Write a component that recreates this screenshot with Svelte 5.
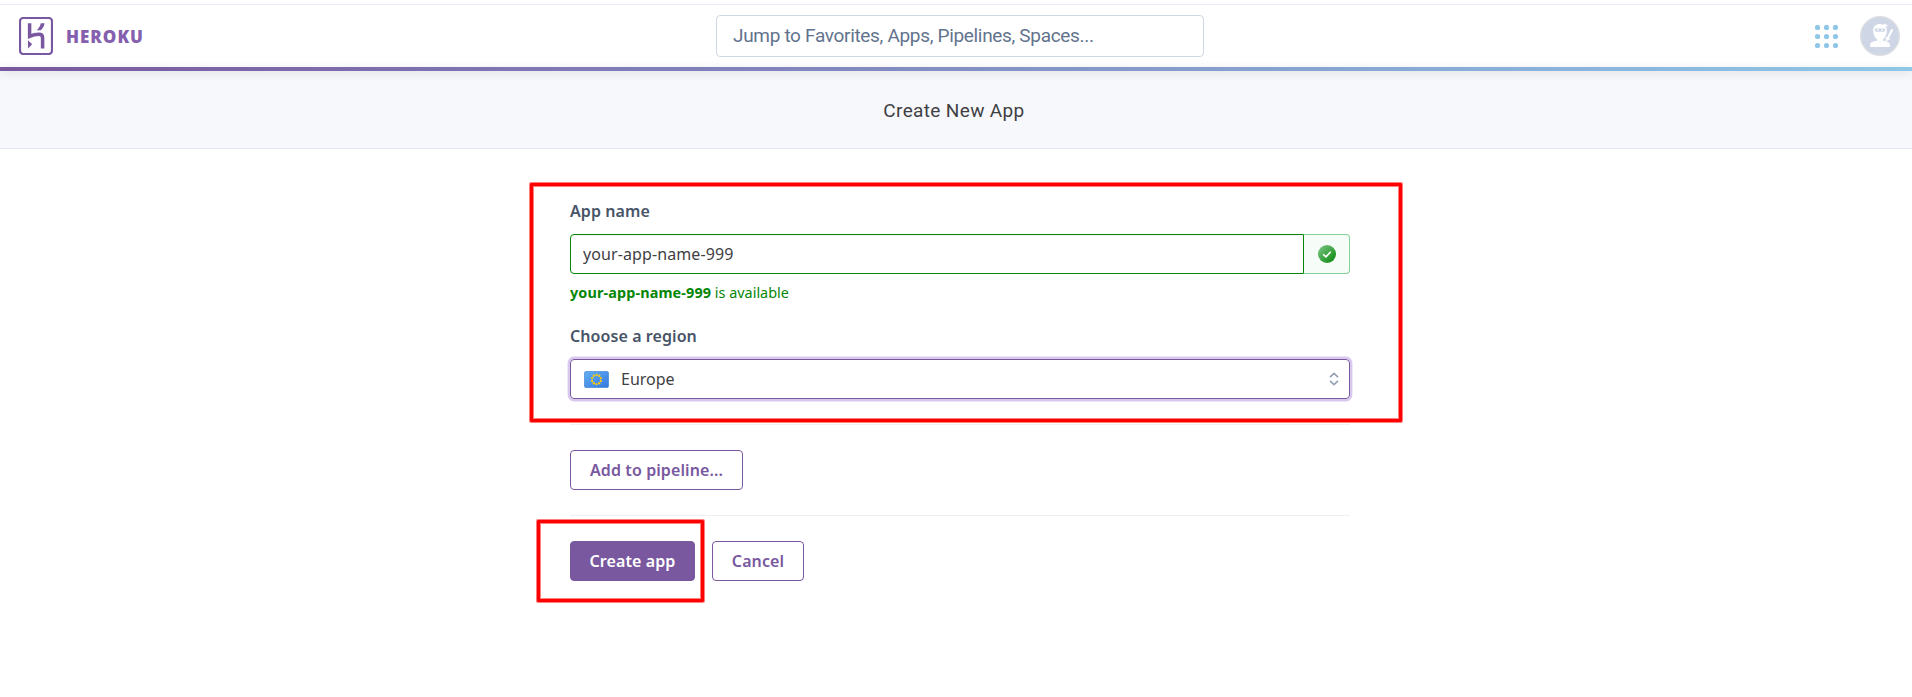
<script>
  let appName = $state('your-app-name-999');
  const dots = [0, 1, 2, 3, 4, 5, 6, 7, 8];
  const stars = Array.from({ length: 10 }, (_, i) => {
    const a = (i * Math.PI) / 5 - Math.PI / 2;
    return { x: 12.5 + 4.6 * Math.cos(a), y: 8.5 + 4.6 * Math.sin(a) };
  });
</script>

<div class="page">
  <header>
    <div class="brand">
      <svg class="logo" width="34" height="38" viewBox="0 0 34 38">
        <rect x="1" y="1" width="32" height="36" rx="3.2" fill="none" stroke="#79589f" stroke-width="2.2" />
        <path d="M10.6 6.2V19.4C13.7 18 17 17.3 20 17.3C22.6 17.3 23.6 18.6 23.6 21V31.4" fill="none" stroke="#79589f" stroke-width="3.5" />
        <path d="M9 23.2L13.2 27.3L9 31.4Z" fill="#79589f" />
        <path d="M21.8 6.2H25.6C25.2 8.8 23.8 11.2 21.8 13.2H17.8C19.8 11.2 21.3 8.8 21.8 6.2Z" fill="#79589f" />
      </svg>
      <span class="wordmark">HEROKU</span>
    </div>
    <div class="search"><span>Jump to Favorites, Apps, Pipelines, Spaces...</span></div>
    <div class="tools">
      <svg width="23" height="23" viewBox="0 0 23 23" fill="#8ec7e8">
        {#each dots as d}
          <circle cx={2.5 + (d % 3) * 9} cy={2.5 + Math.floor(d / 3) * 9} r="2.6" />
        {/each}
      </svg>
      <svg width="40" height="40" viewBox="0 0 40 40">
        <circle cx="20" cy="20" r="19.4" fill="#cfd7e6" stroke="#dfdfe2" stroke-width="1.2" />
        <g fill="#fff">
          <path d="M13.2 14.5C13.2 10.5 16 8.1 20 8.1C21.3 8.1 22.3 8.4 23 8.8L26.3 7.2L25.7 8.8L28.6 8.9L26 10.6C26.6 11.7 26.8 13 26.8 14.5C26.8 18 25.5 21.6 23 23.2V24.7C27.5 25.2 30 26.5 30 29V30C30 30.6 29.6 31 29 31H11C10.4 31 10 30.6 10 30V29C10 26.5 12.5 25.2 17 24.7V23.2C14.5 21.6 13.2 18 13.2 14.5Z" />
          <path d="M31.4 12.8L33.3 13.8L29 22.2L30.2 23L29.5 24.1L28.2 23.5L27.3 25.2L25.5 24.2L26.4 22.4L25.5 21.7L26.1 20.6L27.3 21.2Z" />
        </g>
        <path d="M14.8 12.6H25.2V14C25.2 15.2 24.3 15.8 23.2 15.8H16.8C15.7 15.8 14.8 15.2 14.8 14Z" fill="#cfd7e6" />
        <path d="M16.7 14H18.8M21.2 14H23.3" stroke="#fff" stroke-width="1" />
      </svg>
    </div>
  </header>
  <div class="rainbow"></div>
  <div class="subheader"><h1>Create New App</h1></div>

  <main>
    <div class="fields">
      <label class="title" for="name">App name</label>
      <div class="name-row">
        <input id="name" bind:value={appName} spellcheck="false" />
        <div class="addon">
          <svg width="18" height="18" viewBox="0 0 18 18">
            <defs>
              <linearGradient id="ok" x1="0" y1="0" x2="1" y2="1">
                <stop offset="0" stop-color="#80c789" />
                <stop offset="1" stop-color="#048606" />
              </linearGradient>
            </defs>
            <circle cx="9" cy="9" r="9" fill="url(#ok)" />
            <path d="M5.2 9.3L8 11.9L12.7 6.7" fill="none" stroke="#fff" stroke-width="1.6" />
          </svg>
        </div>
      </div>
      <p class="available"><strong>{appName}</strong> is available</p>
      <div class="title region">Choose a region</div>
      <div class="select">
        <svg width="25" height="17" viewBox="0 0 25 17">
          <defs>
            <linearGradient id="eu" x1="0" y1="0" x2="1" y2="1">
              <stop offset="0" stop-color="#62b0f3" />
              <stop offset="1" stop-color="#3478e0" />
            </linearGradient>
          </defs>
          <rect x=".5" y=".5" width="24" height="16" rx="1.5" fill="url(#eu)" stroke="#3d7fcf" stroke-opacity=".65" />
          {#each stars as s}
            <circle cx={s.x} cy={s.y} r="1.2" fill="#f3c51c" />
          {/each}
        </svg>
        <span>Europe</span>
        <svg class="arrows" width="10" height="14" viewBox="0 0 10 14" fill="none" stroke="#96a3b6" stroke-width="1.8">
          <path d="M1 5.2L5 1.4L9 5.2M1 8.8L5 12.6L9 8.8" />
        </svg>
      </div>
      <div class="frame frame-fields"></div>
    </div>

    <div class="pipeline"><button class="b-pipe">Add to pipeline...</button></div>
    <div class="actions">
      <button class="primary">Create app</button>
      <button class="b-cancel">Cancel</button>
      <div class="frame frame-create"></div>
    </div>
  </main>
</div>

<style>
  :global(body) { background: #fff; overflow: hidden; }
  .page, .page * { box-sizing: border-box; }
  .page {
    height: 697px;
    padding-top: 4px;
    font-family: "Noto Sans", sans-serif;
    font-size: 16px;
    color: #3f3f44;
  }
  header {
    height: 63px;
    border-top: 1px solid #e7ecf4;
    display: grid;
    grid-template-columns: 697px 488px 1fr;
    align-items: center;
    padding: 0 12px 0 19px;
  }
  .brand { display: flex; align-items: center; gap: 13px; }
  .logo { display: block; }
  .wordmark {
    font: 800 17px/24px "Open Sans", sans-serif;
    letter-spacing: 1px;
    color: #8560ae;
    padding-top: 2px;
  }
  .search {
    width: 488px;
    height: 42px;
    border: 1px solid #cfd7e6;
    border-radius: 4px;
    padding-left: 16px;
    font: 400 19px/39px Roboto, sans-serif;
    letter-spacing: -0.32px;
    color: #62738d;
    white-space: nowrap;
  }
  .tools { display: flex; justify-content: flex-end; align-items: center; gap: 22px; }
  .tools svg { display: block; }
  .rainbow {
    position: relative;
    height: 4px;
    background: linear-gradient(to right, #79589f, #8ec7e8);
    box-shadow: 0 2px 8px rgba(60, 60, 90, 0.17);
  }
  .subheader {
    height: 78px;
    background: #f7f8fb;
    border-bottom: 1px solid #e3e8f1;
    text-align: center;
  }
  h1 {
    margin: 0;
    font: 400 19px/79px Roboto, sans-serif;
    letter-spacing: 0.35px;
    color: #3f3f44;
    padding-right: 4px;
  }
  main { width: 780px; margin-left: 570px; }
  .fields {
    position: relative;
    height: 276px;
    padding-top: 50px;
    border-bottom: 1px solid #f0f0f6;
  }
  .title {
    display: block;
    height: 35px;
    font-weight: 600;
    line-height: 24px;
    letter-spacing: 0.08px;
    color: #475468;
  }
  .name-row { display: flex; height: 40px; }
  input {
    width: 734px;
    height: 40px;
    border: 1px solid #048606;
    border-radius: 4px 0 0 4px;
    padding: 0 12px 1px;
    font: inherit;
    letter-spacing: 0.1px;
    color: #3f3f44;
    outline: none;
    box-shadow: inset 0 1px 1px rgba(0, 0, 0, 0.05);
  }
  .addon {
    width: 46px;
    border: 1px solid #86d09a;
    border-left: 0;
    border-radius: 0 4px 4px 0;
    background: #f6fcf8;
    display: flex;
    align-items: center;
    justify-content: center;
  }
  .available {
    margin: 7px 0 0;
    font-size: 14.4px;
    line-height: 24px;
    color: #048606;
  }
  .available strong { letter-spacing: 0.13px; }
  .region { margin-top: 19px; }
  .select {
    display: flex;
    align-items: center;
    height: 40px;
    border: 1px solid #79589f;
    border-radius: 4px;
    box-shadow: 0 0 0 2.4px #d9c8ee;
    padding: 0 10px 0 13px;
  }
  .select span { margin-left: 12px; line-height: 24px; padding-bottom: 1px; }
  .arrows { margin-left: auto; }
  .pipeline { height: 91px; padding-top: 25px; border-bottom: 1px solid #eeeef5; }
  .actions { position: relative; display: flex; gap: 17px; padding-top: 25px; }
  button {
    height: 40px;
    padding: 0 0 1px;
    border: 1px solid #79589f;
    border-radius: 4px;
    background: #fff;
    color: #79589f;
    font: 600 16px/24px "Noto Sans", sans-serif;
    letter-spacing: 0.1px;
  }
  .b-pipe { width: 173px; }
  .b-cancel { width: 92px; }
  .primary { width: 125px; background: #79589f; color: #fff; }
  .frame {
    position: absolute;
    border: 3px solid #f00;
    border-radius: 1px;
    box-shadow: 0 0 0 1px rgba(255, 0, 0, 0.5), inset 0 0 0 1px rgba(255, 0, 0, 0.5);
    pointer-events: none;
  }
  .frame-fields { left: -40px; top: 34px; width: 872px; height: 239px; }
  .frame-create { left: -33px; top: 4px; width: 167px; height: 82px; }
</style>
